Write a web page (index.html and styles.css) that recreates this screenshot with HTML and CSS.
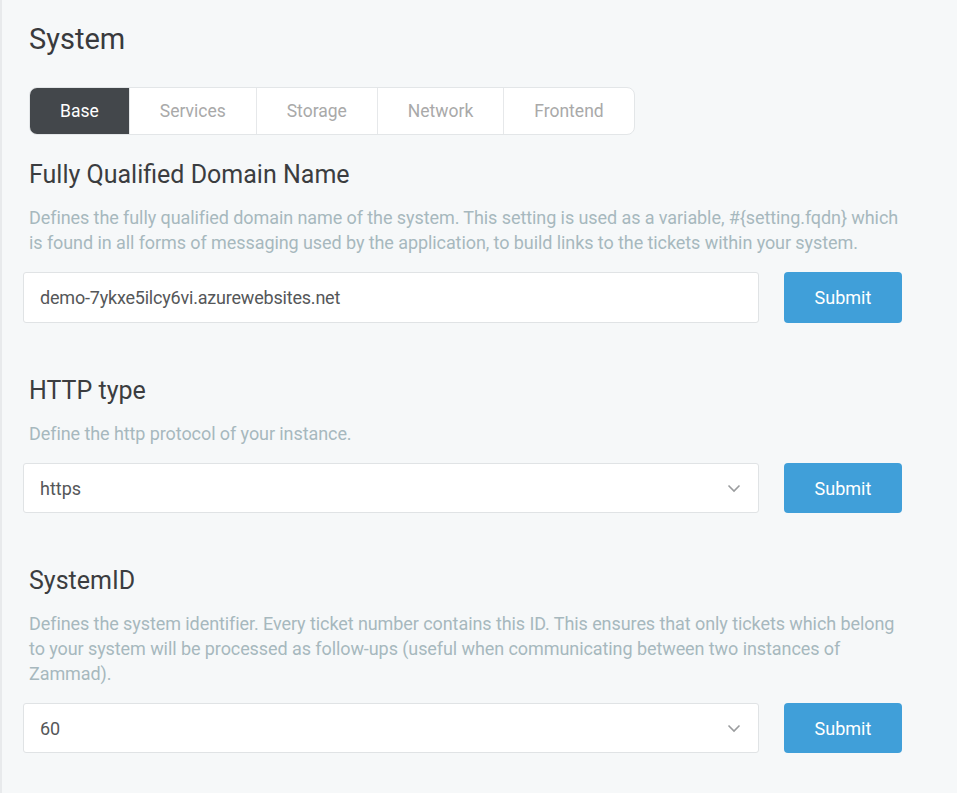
FILE: index.html
```html
<!DOCTYPE html>
<html lang="en">
<head>
<meta charset="utf-8">
<title>System</title>
<link rel="stylesheet" href="styles.css">
</head>
<body>
<main class="page">
  <h1 class="title">System</h1>
  <nav class="tabs">
    <div class="tab active">Base</div>
    <div class="tab">Services</div>
    <div class="tab">Storage</div>
    <div class="tab">Network</div>
    <div class="tab">Frontend</div>
  </nav>

  <section class="setting first">
    <h2 class="setting-title">Fully Qualified Domain Name</h2>
    <p class="desc">Defines the fully qualified domain name of the system. This setting is used as a variable, #{setting.fqdn} which is found in all forms of messaging used by the application, to build links to the tickets within your system.</p>
    <div class="row">
      <input class="control" type="text" value="demo-7ykxe5ilcy6vi.azurewebsites.net">
      <button class="btn">Submit</button>
    </div>
  </section>

  <section class="setting">
    <h2 class="setting-title">HTTP type</h2>
    <p class="desc">Define the http protocol of your instance.</p>
    <div class="row">
      <div class="control select">
        <span>https</span>
        <svg class="chevron" width="14" height="9" viewBox="0 0 14 9"><path d="M1.5 1.5 L7 7 L12.5 1.5" fill="none" stroke="#9a9c9e" stroke-width="1.6"/></svg>
      </div>
      <button class="btn">Submit</button>
    </div>
  </section>

  <section class="setting">
    <h2 class="setting-title">SystemID</h2>
    <p class="desc">Defines the system identifier. Every ticket number contains this ID. This ensures that only tickets which belong to your system will be processed as follow-ups (useful when communicating between two instances of Zammad).</p>
    <div class="row">
      <div class="control select">
        <span>60</span>
        <svg class="chevron" width="14" height="9" viewBox="0 0 14 9"><path d="M1.5 1.5 L7 7 L12.5 1.5" fill="none" stroke="#9a9c9e" stroke-width="1.6"/></svg>
      </div>
      <button class="btn">Submit</button>
    </div>
  </section>
</main>
</body>
</html>
```

FILE: styles.css
```css
html, body {
  margin: 0;
  padding: 0;
}

body {
  background: #f6f8f9;
  font-family: Roboto, "Open Sans", sans-serif;
  color: #3c3e41;
}

.page {
  min-height: 793px;
  box-sizing: border-box;
  border-left: 2px solid #e8eaec;
  padding: 21px 54px 0 27px;
}

.title {
  margin: 0;
  font-size: 29px;
  line-height: 36px;
  font-weight: 400;
  color: #393a3d;
}

.tabs {
  display: inline-flex;
  margin-top: 30px;
  height: 48px;
  box-sizing: border-box;
  border: 1px solid #e3e6e8;
  border-radius: 8px;
  background: #ffffff;
  overflow: hidden;
}

.tab {
  display: flex;
  align-items: center;
  padding: 0 30px;
  font-size: 17.5px;
  color: #a9a9a9;
  border-left: 1px solid #e6e8ea;
}

.tab:first-child {
  border-left: none;
}

.tab.active {
  background: #43474b;
  color: #ffffff;
}

.setting {
  margin-top: 53px;
}

.setting.first {
  margin-top: 25px;
}

.setting-title {
  margin: 0;
  font-size: 25px;
  line-height: 30px;
  font-weight: 400;
  color: #3b3d40;
}

.desc {
  margin: 15px 0 0;
  font-size: 18px;
  line-height: 25px;
  letter-spacing: -0.08px;
  color: #a7b8be;
}

.row {
  display: flex;
  gap: 25px;
  margin: 17px 1px 0 -6px;
}

.control {
  flex: 1;
  height: 51px;
  box-sizing: border-box;
  border: 1px solid #e0e3e5;
  border-radius: 3px;
  background: #ffffff;
  padding: 0 16px;
  font-family: inherit;
  font-size: 18px;
  letter-spacing: -0.2px;
  color: #555759;
  outline: none;
}

.select {
  display: flex;
  align-items: center;
  justify-content: space-between;
  height: 50px;
  letter-spacing: 0;
}

.chevron {
  margin-right: 1px;
}

.btn {
  width: 118px;
  height: 51px;
  flex: none;
  border: none;
  border-radius: 4px;
  background: #409fd9;
  color: #ffffff;
  font-family: inherit;
  font-size: 18px;
}

.select + .btn {
  height: 50px;
}
```
